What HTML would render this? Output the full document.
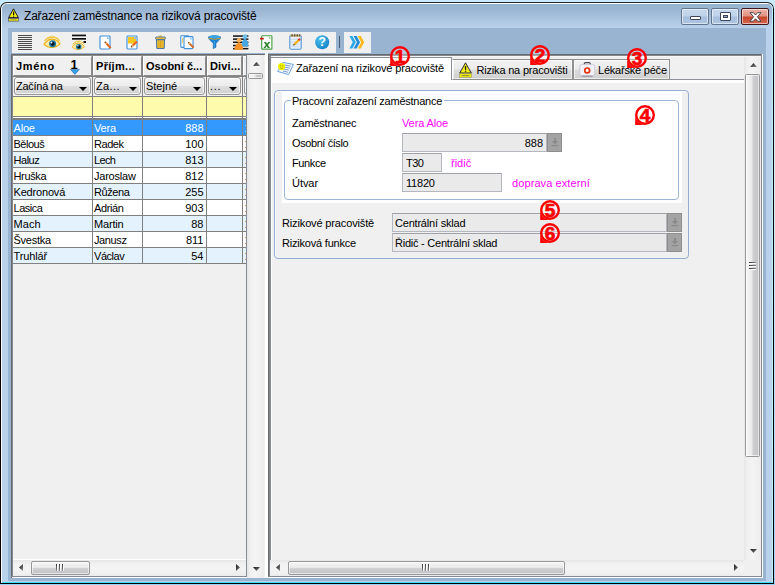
<!DOCTYPE html>
<html lang="cs">
<head>
<meta charset="utf-8">
<title>Zařazení zaměstnance na riziková pracoviště</title>
<style>
html,body{margin:0;padding:0;}
body{width:775px;height:585px;overflow:hidden;position:relative;background:linear-gradient(#c9eafc,#d4edfb 30%,#93d5fa);font-family:"Liberation Sans",sans-serif;font-size:11px;color:#000;}
#root,#root div,#root span,#root svg{position:absolute;box-sizing:border-box;}
#root{left:0;top:0;width:775px;height:585px;}
.t{white-space:nowrap;line-height:14px;height:14px;font-size:11px;}
.b{font-weight:bold;}
.m{color:#f0f;}
#win{left:0;top:2px;width:774px;height:582px;background:linear-gradient(#2a2a2a,#000 12px);border-radius:7px 7px 0 0;}
#winhi{left:1px;top:3px;width:772px;height:580px;background:#fff;border-radius:6px 6px 0 0;}
#frame{left:2px;top:4px;width:771px;height:579px;background:#b9d1ea;border-radius:5px 5px 0 0;border-right:1px solid #c4f0fb;border-bottom:1px solid #3fe0f7;}
#titlegrad{left:2px;top:4px;width:770px;height:24px;background:linear-gradient(#98b3d0 0,#9bb6d3 25%,#b9d1ea 100%);border-radius:5px 5px 0 0;}
#client{left:8px;top:28px;width:758px;height:553px;background:#99b4d1;}
#title{left:24px;top:8px;font-size:12px;line-height:16px;height:16px;white-space:nowrap;color:#000;}
.cb{top:8px;height:17px;border:1px solid #64758e;border-radius:2px;box-shadow:inset 0 0 0 1px rgba(255,255,255,.55);}
.cbn{background:linear-gradient(#c6d8ee 0,#bfd3ea 47%,#a8c0dd 53%,#adc5e1 100%);}
.cbx{background:linear-gradient(#eab1a5 0,#e29483 47%,#c7452c 53%,#d4674f 100%);border-color:#43161b;}
.tb{background:#f0f0f0;top:32px;height:21px;}
.sunk{border-style:solid;border-width:2px 0 1px 2px;border-color:#696969 #8a8a95 #8a8a95 #696969;background:#f0f0f0;}
.hc{background:#f0f0f0;border:1px solid;border-color:#fff #8c8c8c #8c8c8c #fff;}
.gv{background:#808080;width:1px;}
.gh{background:#808080;height:1px;}
.fc{border:1px solid #979797;border-radius:3px;background:linear-gradient(#f4f4f4 0,#ececec 48%,#dedede 52%,#d0d0d0 100%);box-shadow:inset 0 0 0 1px rgba(255,255,255,.7);}
.arr{width:0;height:0;border-left:4px solid transparent;border-right:4px solid transparent;border-top:4px solid #000;}
.fld{background:#eaeaea;border:1px solid #b4b7be;border-top-color:#9fa2a9;}

.itab{border:1px solid #8e8f8f;border-bottom-color:#8e8f8f;background:linear-gradient(#f2f2f2 0,#ebebeb 48%,#dddddd 52%,#cfcfcf 100%);box-shadow:inset 0 0 0 1px rgba(255,255,255,.6);}
.fbtn{background:#a3a3a3;border:1px solid #8f8f8f;}

.vtrack{background:linear-gradient(90deg,#e6e6e6,#f0f0f0 20%,#f4f4f4 50%,#f0f0f0 80%,#ebebeb);}
.htrack{background:linear-gradient(#e6e6e6,#f0f0f0 20%,#f4f4f4 50%,#f0f0f0 80%,#ebebeb);}
.vthumb{border:1px solid #979797;border-radius:1.5px;background:linear-gradient(90deg,#f6f6f6,#eaeaea 45%,#cfcfd2 55%,#c2c2c6);box-shadow:inset 0 0 0 1px rgba(255,255,255,.6);}
.hthumb{border:1px solid #979797;border-radius:2px;background:linear-gradient(#f6f6f6,#eaeaea 45%,#cfcfd2 55%,#c2c2c6);box-shadow:inset 0 0 0 1px rgba(255,255,255,.6);}
.gripv{width:7px;height:1px;background:linear-gradient(90deg,#333,#8a8a8a);box-shadow:0 1px 0 #fff;}
.griph{width:1px;height:7px;background:linear-gradient(#333,#8a8a8a);box-shadow:1px 0 0 #fff;}
</style>
</head>
<body>
<div id="root">
<div id="win"></div><div id="winhi"></div><div id="frame"></div><div id="titlegrad"></div><div id="client"></div>
<svg style="left:8px;top:8px" width="11" height="14" viewBox="0 0 11 14"><path d="M5.5 0.8 L10.4 9.6 L0.6 9.6 Z" fill="#f4ee10" stroke="#1a1a30" stroke-width="1"/><rect x="5" y="3.6" width="1.2" height="3.4" fill="#111"/><rect x="5" y="7.6" width="1.2" height="1" fill="#111"/><rect x="0.5" y="10.5" width="10" height="2.6" fill="#f4ee10" stroke="#3a3a60" stroke-width=".6"/><rect x="2.4" y="11.5" width="6.2" height=".7" fill="#8a8a30"/></svg>
<div id="title" style="letter-spacing:-0.195px">Zařazení zaměstnance na riziková pracoviště</div>
<div class="cb cbn" style="left:681px;width:28px"><div style="left:8px;top:7px;width:11px;height:4px;background:#fff;border:1px solid #3c4658;border-radius:1px"></div></div>
<div class="cb cbn" style="left:711px;width:28px"><div style="left:8px;top:3px;width:11px;height:9px;background:#fff;border:1px solid #3c4658;border-radius:1px"></div><div style="left:11px;top:6px;width:5px;height:3px;background:#8fa6c4;border:1px solid #3c4658"></div></div>
<div class="cb cbx" style="left:741px;width:28px"><svg style="left:7px;top:2.5px" width="13" height="10" viewBox="0 0 13 10"><path d="M1 0.7 L4.4 0.7 L6.5 3 L8.6 0.7 L12 0.7 L8.4 4.8 L12 9.2 L8.6 9.2 L6.5 6.8 L4.4 9.2 L1 9.2 L4.6 4.8 Z" fill="#fff" stroke="#3a3a48" stroke-width=".9" stroke-linejoin="round"/></svg></div>
<div class="tb" style="left:12px;width:324px;"></div><div class="tb" style="left:344px;width:27px;"></div><div style="left:339px;top:36px;width:1px;height:12px;background:#4a5a6a;"></div>
<svg style="left:18px;top:35px" width="14" height="16" viewBox="0 0 14 16"><rect x="0" y="0" width="14" height="1" fill="#4a4a4a"/><rect x="0" y="2" width="14" height="1" fill="#4a4a4a"/><rect x="0" y="4" width="14" height="1" fill="#4a4a4a"/><rect x="0" y="6" width="14" height="1" fill="#4a4a4a"/><rect x="0" y="8" width="14" height="1" fill="#4a4a4a"/><rect x="0" y="10" width="14" height="1" fill="#4a4a4a"/><rect x="0" y="12" width="14" height="1" fill="#4a4a4a"/><rect x="0" y="14" width="14" height="1" fill="#4a4a4a"/></svg>
<svg style="left:43px;top:34px" width="18" height="16" viewBox="0 0 18 16"><g transform="translate(9,9.5) scale(1.0)"><path d="M-8 0.6 Q-4 -4.6 0.5 -4.4 Q5.5 -4.1 8 0.6 Q4.2 4 -0.5 4 Q-5.5 3.8 -8 0.6 Z" fill="#fbeaa8" stroke="#ecb010" stroke-width="1.1"/><path d="M-7.6 -2.6 Q-3 -7.4 3 -6.2 Q6.4 -5.2 7.6 -2.4" fill="none" stroke="#f2c22a" stroke-width="1.2"/><path d="M-6.2 -4.9 Q-2.4 -8 2.6 -7.4" fill="none" stroke="#f4cc50" stroke-width=".7"/><circle cx="0.6" cy="0.3" r="3.5" fill="#1c7aa2"/><circle cx="0.6" cy="0.3" r="2" fill="#08141f"/><circle cx="-0.5" cy="-0.9" r=".9" fill="#fff"/></g></svg>
<svg style="left:70px;top:33px" width="18" height="18" viewBox="0 0 18 18"><rect x="2" y="1.6" width="14" height="1.7" fill="#111"/><rect x="2" y="5" width="14" height="1.7" fill="#111"/><rect x="13.5" y="8" width="2.5" height="2" fill="#111"/><g transform="translate(8.3,13.4) scale(0.78)"><path d="M-8 0.6 Q-4 -4.6 0.5 -4.4 Q5.5 -4.1 8 0.6 Q4.2 4 -0.5 4 Q-5.5 3.8 -8 0.6 Z" fill="#fbeaa8" stroke="#ecb010" stroke-width="1.1"/><path d="M-7.6 -2.6 Q-3 -7.4 3 -6.2 Q6.4 -5.2 7.6 -2.4" fill="none" stroke="#f2c22a" stroke-width="1.2"/><path d="M-6.2 -4.9 Q-2.4 -8 2.6 -7.4" fill="none" stroke="#f4cc50" stroke-width=".7"/><circle cx="0.6" cy="0.3" r="3.5" fill="#1c7aa2"/><circle cx="0.6" cy="0.3" r="2" fill="#08141f"/><circle cx="-0.5" cy="-0.9" r=".9" fill="#fff"/></g></svg>
<svg style="left:99px;top:35px" width="13" height="15" viewBox="0 0 13 15"><rect x="1" y="1" width="10" height="13" rx=".9" fill="#fff" stroke="#3f92da" stroke-width="1.15"/><path d="M8 1.2 L10.8 4 L8 4 Z" fill="#8cc4f0"/><line x1="6.2" y1="7.2" x2="11.8" y2="13" stroke="#e0641c" stroke-width="2" stroke-linecap="butt"/><line x1="6.2" y1="7.2" x2="7.6000000000000005" y2="8.65" stroke="#f2c48a" stroke-width="1.6"/><circle cx="6.2" cy="7.2" r=".7" fill="#5a3a1a"/></svg>
<svg style="left:126px;top:35px" width="13" height="15" viewBox="0 0 13 15"><rect x="1" y="1" width="10" height="13" rx=".9" fill="#fff" stroke="#3f92da" stroke-width="1.15"/><rect x="2" y="2" width="8" height="6.6" fill="#fbc520"/><path d="M8 1.2 L10.8 4 L8 4 Z" fill="#8cc4f0"/><line x1="5.5" y1="11.8" x2="11" y2="6.5" stroke="#e0641c" stroke-width="2" stroke-linecap="butt"/><line x1="5.5" y1="11.8" x2="6.875" y2="10.475000000000001" stroke="#f2c48a" stroke-width="1.6"/><circle cx="5.5" cy="11.8" r=".7" fill="#5a3a1a"/></svg>
<svg style="left:155px;top:35px" width="11" height="15" viewBox="0 0 11 15"><path d="M4 1.6 Q5.5 0 7 1.6" fill="none" stroke="#e8b820" stroke-width="1.2"/><rect x="0.6" y="2" width="9.8" height="2.4" rx=".8" fill="#f3c232" stroke="#4472aa" stroke-width=".9"/><path d="M1.5 4.8 L9.5 4.8 L9.2 13.4 L1.8 13.4 Z" fill="#f3c232" stroke="#3d6aa3" stroke-width="1"/><rect x="3.4" y="6" width="1" height="6.4" fill="#d9a520"/><rect x="5" y="6" width="1" height="6.4" fill="#d9a520"/><rect x="6.6" y="6" width="1" height="6.4" fill="#d9a520"/></svg>
<svg style="left:180px;top:35px" width="15" height="15" viewBox="0 0 15 15"><rect x="0.8" y="0.8" width="8" height="11.6" rx=".8" fill="#fff" stroke="#3f92da" stroke-width="1.1"/><rect x="2" y="3" width="1" height="5" fill="#f5d060"/><rect x="4" y="1.6" width="9" height="12" rx=".9" fill="#fff" stroke="#3f92da" stroke-width="1.1"/><path d="M10.2 1.8 L12.8 4.4 L10.2 4.4 Z" fill="#8cc4f0"/><line x1="8.6" y1="7.6" x2="13.6" y2="12.6" stroke="#e0641c" stroke-width="2" stroke-linecap="butt"/><line x1="8.6" y1="7.6" x2="9.85" y2="8.85" stroke="#f2c48a" stroke-width="1.6"/><circle cx="8.6" cy="7.6" r=".7" fill="#5a3a1a"/></svg>
<svg style="left:208px;top:35px" width="13" height="14" viewBox="0 0 13 14"><path d="M0.4 1.8 Q6.5 -0.9 12.6 1.8 L12.4 3.6 L8 8.6 L8 12.2 L5.2 13.7 L5.2 8.6 L0.6 3.6 Z" fill="#1d82d2" stroke="#1663aa" stroke-width=".5"/><ellipse cx="6.5" cy="1.9" rx="5.5" ry="1.3" fill="#3aa6ec"/><path d="M0.7 3.3 Q6.5 5.3 12.3 3.3" fill="none" stroke="#d8a428" stroke-width="1"/><rect x="5.8" y="6" width=".9" height="6.6" fill="#5ab8f4" opacity=".7"/></svg>
<svg style="left:233.4px;top:33.8px" width="16" height="17" viewBox="0 0 16 17"><rect x="0" y="1.3" width="15.4" height="1.5" fill="#111"/><rect x="0" y="4.4" width="15.4" height="1.5" fill="#111"/><rect x="0" y="7.5" width="15.4" height="1.5" fill="#111"/><rect x="0" y="10.8" width="15.4" height="1.5" fill="#111"/><rect x="0" y="13.9" width="15.4" height="1.5" fill="#111"/><path d="M12 4.6 Q15.6 7 15.2 12 Q12 13.2 8.4 12 Q8.4 7 12 4.6Z" fill="#45a8e2"/><circle cx="12" cy="2.6" r="2.3" fill="#6fc2ee"/><path d="M6 8 Q10.2 10.6 10.2 15.4 Q6 16.4 1.2 15.4 Q1.6 10.6 6 8Z" fill="#f8932a"/><circle cx="6" cy="6.2" r="2.3" fill="#ffb25e"/></svg>
<svg style="left:260px;top:35px" width="13" height="15" viewBox="0 0 13 15"><rect x="1.7" y="0.7" width="10.2" height="13.4" rx=".7" fill="#fff" stroke="#46a046" stroke-width="1.15"/><path d="M8.8 1 L11.6 3.8 L8.8 3.8 Z" fill="#9ad09a"/><rect x="0" y="2.8" width="3.8" height="1.7" fill="#cc1414"/><path d="M3.8 7 L6 7 L7 8.8 L8.4 7 L10.4 7 L7.9 10 L10 13 L7.8 13 L6.8 11.2 L5.4 13 L3.4 13 L5.9 10 Z" fill="#2a7f2a"/></svg>
<svg style="left:289px;top:34px" width="13" height="16" viewBox="0 0 13 16"><rect x="0.8" y="1.2" width="11.4" height="14" rx="1.4" fill="#e6f0fb" stroke="#5593d4" stroke-width="1.1"/><rect x="1.4" y="0.6" width="10.2" height="2.2" fill="#c9b26a"/><rect x="2.4" y="0.4" width="1.4" height="2" fill="#5a5040"/><rect x="5" y="0.4" width="1.4" height="2" fill="#5a5040"/><rect x="7.6" y="0.4" width="1.4" height="2" fill="#5a5040"/><rect x="10" y="0.4" width="1.2" height="2" fill="#5a5040"/><rect x="2.4" y="5.2" width="8" height=".7" fill="#bcd4ee"/><rect x="2.4" y="7.6" width="8" height=".7" fill="#bcd4ee"/><rect x="2.4" y="10" width="8" height=".7" fill="#bcd4ee"/><rect x="2.4" y="12.4" width="8" height=".7" fill="#bcd4ee"/><line x1="5.2" y1="10.6" x2="10" y2="5.8" stroke="#f5b218" stroke-width="2.3"/><line x1="9.6" y1="6.2" x2="11" y2="4.8" stroke="#d23c3c" stroke-width="2.3"/><path d="M4 11.8 L4.7 9.7 L6.1 11.1 Z" fill="#6a4a2a"/></svg>
<svg style="left:315px;top:34.5px" width="15" height="15" viewBox="0 0 15 15"><defs><radialGradient id="gh" cx=".35" cy=".3" r=".8"><stop offset="0" stop-color="#4cc0ee"/><stop offset="1" stop-color="#1480c4"/></radialGradient></defs><circle cx="7.2" cy="7.2" r="7" fill="url(#gh)"/><text x="7.2" y="11.4" style="font:bold 12px 'Liberation Sans',sans-serif" fill="#fff" text-anchor="middle">?</text></svg>
<svg style="left:349px;top:36px" width="16" height="13" viewBox="0 0 16 13"><path d="M0.4 0 L3.4 0 L6.800000000000001 6.2 L3.4 12.4 L0.4 12.4 L3.8 6.2 Z" fill="#2aa9ea"/><path d="M4.6 0 L7.6 0 L11.0 6.2 L7.6 12.4 L4.6 12.4 L8.0 6.2 Z" fill="#1e8cd6"/><path d="M8.8 0 L11.8 0 L15.200000000000001 6.2 L11.8 12.4 L8.8 12.4 L12.200000000000001 6.2 Z" fill="#fbb81a"/></svg>
<div style="left:11px;top:53px;width:257px;height:525px;background:#fff;"></div>
<div style="left:11px;top:53px;width:254px;height:1px;background:#99b4d1;"></div>
<div style="left:11px;top:54px;width:254px;height:523px;background:#f0f0f0"></div>
<div style="left:11px;top:54px;width:254px;height:1px;background:#696969"></div><div style="left:11px;top:54px;width:1px;height:524px;background:#696969"></div>
<div style="left:12px;top:55px;width:235px;height:1px;background:#8c8c8c"></div><div style="left:12px;top:55px;width:1px;height:521px;background:#828790"></div>
<div style="left:11px;top:576px;width:236px;height:1px;background:#868a93"></div><div style="left:247px;top:577px;width:18px;height:1px;background:#f0f0f0"></div>
<div class="hc" style="left:13px;top:56px;width:79px;height:20px"></div>
<div class="t b" style="letter-spacing:0.666px;left:16px;top:59px">Jméno</div>
<div class="fc" style="left:14px;top:77px;width:77px;height:18px"></div>
<div class="t" style="letter-spacing:-0.269px;left:16px;top:79px">Začíná na</div>
<div class="arr" style="left:79px;top:87px"></div>
<div class="hc" style="left:93px;top:56px;width:49px;height:20px"></div>
<div class="t b" style="letter-spacing:0.314px;left:96px;top:59px">Příjm...</div>
<div class="fc" style="left:94px;top:77px;width:47px;height:18px"></div>
<div class="t" style="letter-spacing:0.357px;left:96px;top:79px">Za...</div>
<div class="arr" style="left:129px;top:87px"></div>
<div class="hc" style="left:143px;top:56px;width:63px;height:20px"></div>
<div class="t b" style="letter-spacing:-0.003px;left:146px;top:59px">Osobní č...</div>
<div class="fc" style="left:144px;top:77px;width:61px;height:18px"></div>
<div class="t" style="letter-spacing:-0.017px;left:146px;top:79px">Stejné</div>
<div class="arr" style="left:193px;top:87px"></div>
<div class="hc" style="left:207px;top:56px;width:35px;height:20px"></div>
<div class="t b" style="letter-spacing:0.165px;left:210px;top:59px">Divi...</div>
<div class="fc" style="left:208px;top:77px;width:33px;height:18px"></div>
<div class="t" style="letter-spacing:0.65px;left:210px;top:79px">...</div>
<div class="arr" style="left:229px;top:87px"></div>
<div class="hc" style="left:243px;top:56px;width:3px;height:20px;border-right:0"></div>
<div class="fc" style="left:244px;top:77px;width:6px;height:18px"></div>
<div class="t b" style="left:70.5px;top:57.5px;font-size:13px;line-height:14px">1</div>
<svg style="left:70px;top:68.5px" width="10" height="6" viewBox="0 0 10 6"><path d="M0.4 0.4 L9.4 0.4 L4.9 5.4 Z" fill="#2ea4ee" stroke="#2a4a9a" stroke-width=".5"/></svg>
<div style="left:13px;top:97px;width:233px;height:19px;background:#fffbad"></div>
<div style="left:13px;top:116px;width:233px;height:1px;background:#808080"></div>
<div style="left:13px;top:117px;width:233px;height:1px;background:#fff"></div>
<div style="left:13px;top:118px;width:233px;height:2px;background:#7c7c7c"></div>
<div style="left:13px;top:120px;width:233px;height:15px;background:#3399ff"></div>
<div class="t" style="letter-spacing:-0.183px;left:13.5px;top:121px;color:#fff">Aloe</div>
<div class="t" style="letter-spacing:-0.21px;left:94px;top:121px;color:#fff">Vera</div>
<div class="t" style="left:143px;top:121px;width:60.5px;text-align:right;color:#fff">888</div>
<div class="gh" style="left:13px;top:135px;width:233px"></div>
<div style="left:245px;top:125px;width:1px;height:1px;background:#7fe0ff"></div><div style="left:245px;top:131px;width:1px;height:1px;background:#7fe0ff"></div>
<div style="left:13px;top:136px;width:233px;height:15px;background:#fff"></div>
<div class="t" style="letter-spacing:-0.473px;left:13.5px;top:137px;color:#000">Bělouš</div>
<div class="t" style="letter-spacing:-0.459px;left:94px;top:137px;color:#000">Radek</div>
<div class="t" style="left:143px;top:137px;width:60.5px;text-align:right;color:#000">100</div>
<div class="gh" style="left:13px;top:151px;width:233px"></div>
<div style="left:245px;top:141px;width:1px;height:1px;background:#e8963c"></div><div style="left:245px;top:147px;width:1px;height:1px;background:#e8963c"></div>
<div style="left:13px;top:152px;width:233px;height:15px;background:#e3f2fd"></div>
<div class="t" style="letter-spacing:-0.465px;left:13.5px;top:153px;color:#000">Haluz</div>
<div class="t" style="letter-spacing:-0.64px;left:94px;top:153px;color:#000">Lech</div>
<div class="t" style="left:143px;top:153px;width:60.5px;text-align:right;color:#000">813</div>
<div class="gh" style="left:13px;top:167px;width:233px"></div>
<div style="left:245px;top:157px;width:1px;height:1px;background:#e8963c"></div><div style="left:245px;top:163px;width:1px;height:1px;background:#e8963c"></div>
<div style="left:13px;top:168px;width:233px;height:15px;background:#fff"></div>
<div class="t" style="letter-spacing:-0.341px;left:13.5px;top:169px;color:#000">Hruška</div>
<div class="t" style="letter-spacing:-0.226px;left:94px;top:169px;color:#000">Jaroslaw</div>
<div class="t" style="left:143px;top:169px;width:60.5px;text-align:right;color:#000">812</div>
<div class="gh" style="left:13px;top:183px;width:233px"></div>
<div style="left:245px;top:173px;width:1px;height:1px;background:#e8963c"></div><div style="left:245px;top:179px;width:1px;height:1px;background:#e8963c"></div>
<div style="left:13px;top:184px;width:233px;height:15px;background:#e3f2fd"></div>
<div class="t" style="letter-spacing:-0.18px;left:13.5px;top:185px;color:#000">Kedronová</div>
<div class="t" style="letter-spacing:-0.42px;left:94px;top:185px;color:#000">Růžena</div>
<div class="t" style="left:143px;top:185px;width:60.5px;text-align:right;color:#000">255</div>
<div class="gh" style="left:13px;top:199px;width:233px"></div>
<div style="left:245px;top:189px;width:1px;height:1px;background:#e8963c"></div><div style="left:245px;top:195px;width:1px;height:1px;background:#e8963c"></div>
<div style="left:13px;top:200px;width:233px;height:15px;background:#fff"></div>
<div class="t" style="letter-spacing:-0.466px;left:13.5px;top:201px;color:#000">Lasica</div>
<div class="t" style="letter-spacing:-0.383px;left:94px;top:201px;color:#000">Adrián</div>
<div class="t" style="left:143px;top:201px;width:60.5px;text-align:right;color:#000">903</div>
<div class="gh" style="left:13px;top:215px;width:233px"></div>
<div style="left:245px;top:205px;width:1px;height:1px;background:#e8963c"></div><div style="left:245px;top:211px;width:1px;height:1px;background:#e8963c"></div>
<div style="left:13px;top:216px;width:233px;height:15px;background:#e3f2fd"></div>
<div class="t" style="letter-spacing:0.073px;left:13.5px;top:217px;color:#000">Mach</div>
<div class="t" style="letter-spacing:-0.177px;left:94px;top:217px;color:#000">Martin</div>
<div class="t" style="left:143px;top:217px;width:60.5px;text-align:right;color:#000">88</div>
<div class="gh" style="left:13px;top:231px;width:233px"></div>
<div style="left:245px;top:221px;width:1px;height:1px;background:#e8963c"></div><div style="left:245px;top:227px;width:1px;height:1px;background:#e8963c"></div>
<div style="left:13px;top:232px;width:233px;height:15px;background:#fff"></div>
<div class="t" style="letter-spacing:-0.234px;left:13.5px;top:233px;color:#000">Švestka</div>
<div class="t" style="letter-spacing:-0.377px;left:94px;top:233px;color:#000">Janusz</div>
<div class="t" style="left:143px;top:233px;width:60.5px;text-align:right;color:#000">811</div>
<div class="gh" style="left:13px;top:247px;width:233px"></div>
<div style="left:245px;top:237px;width:1px;height:1px;background:#e8963c"></div><div style="left:245px;top:243px;width:1px;height:1px;background:#e8963c"></div>
<div style="left:13px;top:248px;width:233px;height:15px;background:#e3f2fd"></div>
<div class="t" style="letter-spacing:-0.12px;left:13.5px;top:249px;color:#000">Truhlář</div>
<div class="t" style="letter-spacing:-0.455px;left:94px;top:249px;color:#000">Václav</div>
<div class="t" style="left:143px;top:249px;width:60.5px;text-align:right;color:#000">54</div>
<div class="gh" style="left:13px;top:263px;width:233px"></div>
<div style="left:245px;top:253px;width:1px;height:1px;background:#e8963c"></div><div style="left:245px;top:259px;width:1px;height:1px;background:#e8963c"></div>
<div class="gv" style="left:92px;top:56px;height:208px"></div>
<div class="gv" style="left:142px;top:56px;height:208px"></div>
<div class="gv" style="left:206px;top:56px;height:208px"></div>
<div class="gv" style="left:242px;top:56px;height:208px"></div>
<div class="gh" style="left:13px;top:76px;width:233px"></div><div class="gh" style="left:13px;top:96px;width:233px"></div>
<div class="gv" style="left:246px;top:56px;height:521px;background:#868a93"></div>
<svg width="0" height="0" style="left:0;top:0"><defs><linearGradient id="ga" x1="0" y1="0" x2="1" y2="1"><stop offset="0" stop-color="#151515"/><stop offset="1" stop-color="#8a8a8a"/></linearGradient></defs></svg><div class="vtrack" style="left:247px;top:55px;width:17px;height:523px"></div>
<svg style="left:253px;top:62px" width="7" height="4" viewBox="0 0 7 4"><path d="M3.5 0 L7 4 L0 4 Z" fill="url(#ga)"/></svg>
<svg style="left:253px;top:567px" width="7" height="4" viewBox="0 0 7 4"><path d="M0 0 L7 0 L3.5 4 Z" fill="url(#ga)"/></svg>
<div class="vthumb" style="left:248px;top:73px;width:15px;height:6px"></div>
<div class="htrack" style="left:13px;top:560px;width:233px;height:16px"></div>
<svg style="left:19px;top:564px" width="4" height="7" viewBox="0 0 4 7"><path d="M4 0 L4 7 L0 3.5 Z" fill="url(#ga)"/></svg>
<svg style="left:236px;top:564px" width="4" height="7" viewBox="0 0 4 7"><path d="M0 0 L4 3.5 L0 7 Z" fill="url(#ga)"/></svg>
<div class="hthumb" style="left:31px;top:561px;width:59px;height:14px"></div>
<div class="griph" style="left:56px;top:564px"></div>
<div class="griph" style="left:59px;top:564px"></div>
<div class="griph" style="left:62px;top:564px"></div>
<div style="left:13px;top:559px;width:233px;height:1px;background:#fff"></div>
<div style="left:268px;top:54px;width:494px;height:523px;background:#f0f0f0"></div>
<div style="left:268px;top:54px;width:494px;height:1px;background:#696969"></div><div style="left:268px;top:54px;width:1px;height:523px;background:#696969"></div>
<div style="left:269px;top:55px;width:493px;height:1px;background:#828790"></div><div style="left:269px;top:55px;width:2px;height:521px;background:#828790"></div>
<div style="left:271px;top:56px;width:490px;height:1px;background:#f7f7f7"></div><div style="left:271px;top:57px;width:1px;height:503px;background:#fff"></div>
<div style="left:268px;top:576px;width:494px;height:1px;background:#868a93"></div><div style="left:761px;top:54px;width:1px;height:523px;background:#868a93"></div>
<div style="left:762px;top:54px;width:1px;height:524px;background:#fff"></div><div style="left:268px;top:577px;width:495px;height:1px;background:#fff"></div>
<div style="left:272px;top:79px;width:472px;height:1px;background:#8e9199"></div>
<div style="left:272px;top:80px;width:472px;height:3px;background:#fff"></div>
<div style="left:271px;top:57px;width:181px;height:26px;background:#fff;border-top:1px solid #8a8f98;border-right:1px solid #8a8f98"></div>
<div style="left:451px;top:80px;width:1px;height:3px;background:#fff"></div>
<div class="itab" style="left:452px;top:59px;width:121px;height:21px;border-left-color:#fff"></div>
<div class="itab" style="left:573px;top:59px;width:97px;height:21px"></div>
<div class="t" style="letter-spacing:-0.14px;left:296px;top:61px">Zařazení na rizikové pracoviště</div>
<div class="t" style="letter-spacing:-0.188px;left:476.5px;top:63px">Rizika na pracovišti</div>
<div class="t" style="letter-spacing:-0.211px;left:598px;top:63px">Lékařské péče</div>
<!--TABICONS-->
<div style="left:274px;top:90px;width:415px;height:169px;border:1px solid #94aecf;border-radius:4px;background:#f0f0f0;box-shadow:inset 1px 1px 0 #fff"></div>
<div style="left:282px;top:92px;width:400px;height:111px;background:#fff"></div>
<div style="left:284px;top:100px;width:395px;height:100px;border:1px solid #9db5d3;border-radius:4px"></div>
<div class="t" style="letter-spacing:-0.243px;left:291px;top:94px;background:#fff;padding:0 2px 0 1px">Pracovní zařazení zaměstnance</div>
<div class="t" style="letter-spacing:-0.214px;left:292px;top:116px">Zaměstnanec</div>
<div class="t" style="letter-spacing:-0.412px;left:292px;top:136px">Osobní číslo</div>
<div class="t" style="letter-spacing:-0.38px;left:292px;top:156px">Funkce</div>
<div class="t" style="letter-spacing:-0.056px;left:292px;top:176px">Útvar</div>
<div class="t m" style="letter-spacing:-0.11px;left:402px;top:116px">Vera Aloe</div>
<div class="fld" style="left:402px;top:133px;width:145px;height:19px"></div>
<div class="t" style="left:402px;top:136px;width:141px;text-align:right">888</div>
<div class="fbtn" style="left:547px;top:133px;width:15px;height:19px"></div>
<div class="fld" style="left:402px;top:153px;width:40px;height:19px"></div>
<div class="t" style="letter-spacing:-0.49px;left:406px;top:156px">T30</div>
<div class="t m" style="left:451px;top:156px">řidič</div>
<div class="fld" style="left:402px;top:173px;width:100px;height:19px"></div>
<div class="t" style="letter-spacing:-0.196px;left:406px;top:176px">11820</div>
<div class="t m" style="letter-spacing:0.091px;left:512px;top:176px">doprava externí</div>
<div class="t" style="letter-spacing:-0.14px;left:282px;top:216px">Rizikové pracoviště</div>
<div class="t" style="letter-spacing:-0.203px;left:282px;top:236px">Riziková funkce</div>
<div class="fld" style="left:392px;top:213px;width:275px;height:19px"></div>
<div class="fbtn" style="left:667px;top:213px;width:15px;height:19px"></div>
<div class="t" style="letter-spacing:-0.205px;left:395px;top:216px">Centrální sklad</div>
<div class="fld" style="left:392px;top:233px;width:275px;height:19px"></div>
<div class="fbtn" style="left:667px;top:233px;width:15px;height:19px"></div>
<div class="t" style="letter-spacing:-0.235px;left:395px;top:236px">Řidič - Centrální sklad</div>
<svg style="left:550.5px;top:138px" width="8" height="9" viewBox="0 0 8 9"><path d="M3 0h2v3h2.5L4 6.2 0.5 3H3z" fill="#8b8b8b"/><rect x="0.5" y="7" width="7" height="1.2" fill="#8b8b8b"/></svg>
<svg style="left:670.5px;top:218px" width="8" height="9" viewBox="0 0 8 9"><path d="M3 0h2v3h2.5L4 6.2 0.5 3H3z" fill="#8b8b8b"/><rect x="0.5" y="7" width="7" height="1.2" fill="#8b8b8b"/></svg>
<svg style="left:670.5px;top:238px" width="8" height="9" viewBox="0 0 8 9"><path d="M3 0h2v3h2.5L4 6.2 0.5 3H3z" fill="#8b8b8b"/><rect x="0.5" y="7" width="7" height="1.2" fill="#8b8b8b"/></svg>
<div class="vtrack" style="left:744px;top:57px;width:17px;height:503px"></div>
<svg style="left:750px;top:63px" width="7" height="4" viewBox="0 0 7 4"><path d="M3.5 0 L7 4 L0 4 Z" fill="url(#ga)"/></svg>
<svg style="left:750px;top:549px" width="7" height="4" viewBox="0 0 7 4"><path d="M0 0 L7 0 L3.5 4 Z" fill="url(#ga)"/></svg>
<div class="vthumb" style="left:745px;top:74px;width:15px;height:383px"></div>
<div class="gripv" style="left:749px;top:262px"></div>
<div class="gripv" style="left:749px;top:265px"></div>
<div class="gripv" style="left:749px;top:268px"></div>
<div class="htrack" style="left:270px;top:560px;width:474px;height:16px"></div>
<svg style="left:276px;top:564px" width="4" height="7" viewBox="0 0 4 7"><path d="M4 0 L4 7 L0 3.5 Z" fill="url(#ga)"/></svg>
<svg style="left:734px;top:564px" width="4" height="7" viewBox="0 0 4 7"><path d="M0 0 L4 3.5 L0 7 Z" fill="url(#ga)"/></svg>
<div class="hthumb" style="left:288px;top:561px;width:277px;height:14px"></div>
<div class="griph" style="left:422px;top:564px"></div>
<div class="griph" style="left:425px;top:564px"></div>
<div class="griph" style="left:428px;top:564px"></div>
<div style="left:744px;top:560px;width:17px;height:16px;background:#f0f0f0"></div>
<svg style="left:277px;top:61px" width="17" height="15" viewBox="0 0 17 15"><path d="M6 1.4 L16.4 3.4 L11.6 13.6 L0.6 10.4 Z" fill="#f4f8fd" stroke="#6aa4dc" stroke-width="1"/><path d="M8 4 L13.6 5.2 M7.4 6 L12.8 7.2 M6.8 8 L11.8 9.2 M6 10 L10.8 11.2" stroke="#5a80c8" stroke-width=".8" fill="none"/><circle cx="4.6" cy="5.6" r="3.6" fill="#eef000"/><circle cx="3.5" cy="4.8" r=".5" fill="#8a8a00"/><circle cx="5.7" cy="4.8" r=".5" fill="#8a8a00"/><path d="M3 6.8 Q4.6 8 6.2 6.8" stroke="#8a8a00" stroke-width=".6" fill="none"/></svg>
<svg style="left:459px;top:62px" width="13" height="16" viewBox="0 0 13 16"><path d="M6.5 0.8 L12.3 11 L0.7 11 Z" fill="#f2ee12" stroke="#2a2a3a" stroke-width="1" stroke-linejoin="round"/><rect x="5.9" y="4" width="1.3" height="3.8" fill="#222"/><rect x="5.9" y="8.6" width="1.3" height="1.2" fill="#222"/><rect x="0.6" y="11.8" width="11.8" height="3.4" fill="#f2ee12" stroke="#8a8a40" stroke-width=".5"/><rect x="2.6" y="13.3" width="7.8" height=".8" fill="#77773a"/></svg>
<svg style="left:579px;top:62px" width="17" height="15" viewBox="0 0 17 15"><path d="M5.4 2.6 L5.4 1.6 Q5.4 0.6 6.4 0.6 L10.2 0.6 Q11.2 0.6 11.2 1.6 L11.2 2.6" fill="none" stroke="#4a4a52" stroke-width="1.2"/><rect x="0.8" y="2.4" width="15" height="11.6" rx="2.4" fill="#f0f0f5" stroke="#c0c0d0" stroke-width=".8"/><rect x="2.6" y="13.6" width="11" height="1" fill="#8a8a98"/><circle cx="8.2" cy="8.4" r="2.4" fill="#fff" stroke="#e8300e" stroke-width="1.7"/></svg>
<svg style="left:390px;top:45.5px" width="21" height="21" viewBox="0 0 21 21"><path d="M0.2 10 L0.2 20 L10 20 A10 10 0 0 1 0.2 10Z" fill="#f00"/><circle cx="10" cy="10" r="8.8" fill="rgba(255,255,255,.3)" stroke="#f00" stroke-width="2.4"/><text x="10" y="16.8" style="font:bold 19px 'Liberation Sans',sans-serif" fill="#f00" stroke="#f00" stroke-width=".7" text-anchor="middle">1</text></svg>
<svg style="left:530px;top:45px" width="21" height="21" viewBox="0 0 21 21"><path d="M0.2 10 L0.2 20 L10 20 A10 10 0 0 1 0.2 10Z" fill="#f00"/><circle cx="10" cy="10" r="8.8" fill="rgba(255,255,255,.3)" stroke="#f00" stroke-width="2.4"/><text x="10" y="16.8" style="font:bold 19px 'Liberation Sans',sans-serif" fill="#f00" stroke="#f00" stroke-width=".7" text-anchor="middle">2</text></svg>
<svg style="left:627px;top:48px" width="21" height="21" viewBox="0 0 21 21"><path d="M0.2 10 L0.2 20 L10 20 A10 10 0 0 1 0.2 10Z" fill="#f00"/><circle cx="10" cy="10" r="8.8" fill="rgba(255,255,255,.3)" stroke="#f00" stroke-width="2.4"/><text x="10" y="16.8" style="font:bold 19px 'Liberation Sans',sans-serif" fill="#f00" stroke="#f00" stroke-width=".7" text-anchor="middle">3</text></svg>
<svg style="left:635px;top:105px" width="21" height="21" viewBox="0 0 21 21"><path d="M0.2 10 L0.2 20 L10 20 A10 10 0 0 1 0.2 10Z" fill="#f00"/><circle cx="10" cy="10" r="8.8" fill="rgba(255,255,255,.3)" stroke="#f00" stroke-width="2.4"/><text x="10" y="16.8" style="font:bold 19px 'Liberation Sans',sans-serif" fill="#f00" stroke="#f00" stroke-width=".7" text-anchor="middle">4</text></svg>
<svg style="left:540px;top:199.8px" width="21" height="21" viewBox="0 0 21 21"><path d="M0.2 10 L0.2 20 L10 20 A10 10 0 0 1 0.2 10Z" fill="#f00"/><circle cx="10" cy="10" r="8.8" fill="rgba(255,255,255,.3)" stroke="#f00" stroke-width="2.4"/><text x="10" y="16.8" style="font:bold 19px 'Liberation Sans',sans-serif" fill="#f00" stroke="#f00" stroke-width=".7" text-anchor="middle">5</text></svg>
<svg style="left:540px;top:222.8px" width="21" height="21" viewBox="0 0 21 21"><path d="M0.2 10 L0.2 20 L10 20 A10 10 0 0 1 0.2 10Z" fill="#f00"/><circle cx="10" cy="10" r="8.8" fill="rgba(255,255,255,.3)" stroke="#f00" stroke-width="2.4"/><text x="10" y="16.8" style="font:bold 19px 'Liberation Sans',sans-serif" fill="#f00" stroke="#f00" stroke-width=".7" text-anchor="middle">6</text></svg>
</div>
</body>
</html>
